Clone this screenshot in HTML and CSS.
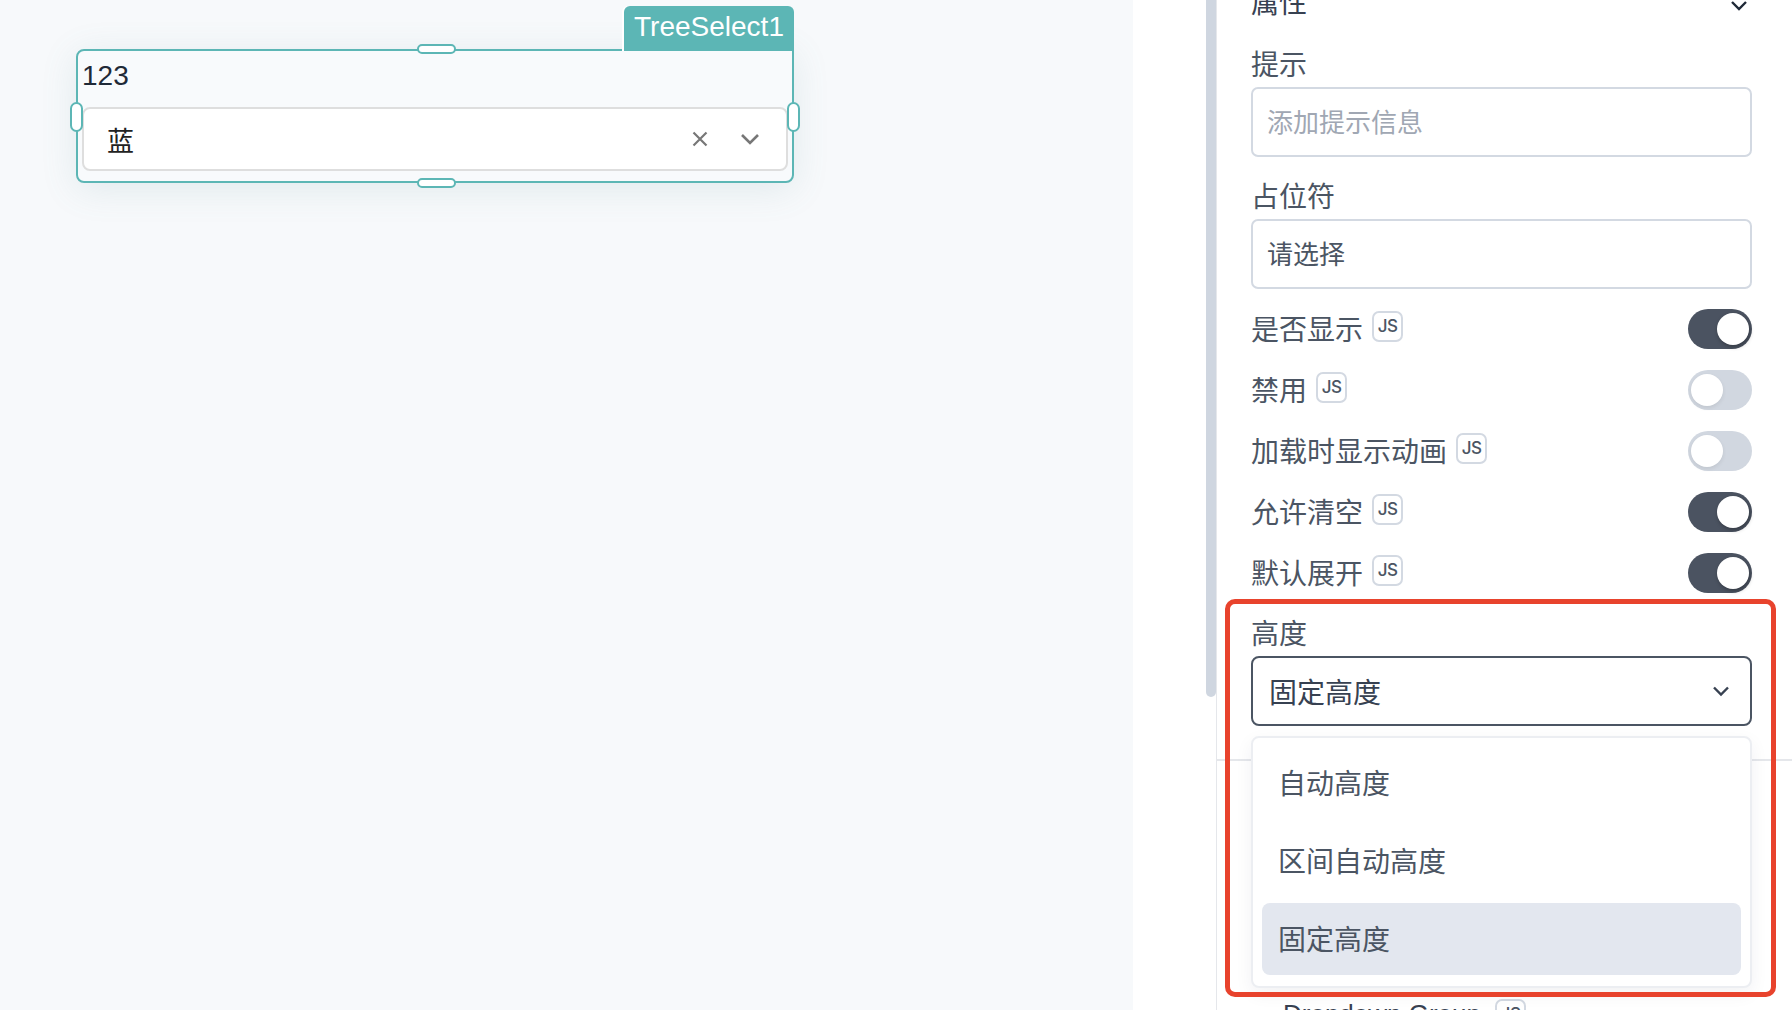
FILE: index.html
```html
<!DOCTYPE html>
<html lang="zh-CN">
<head>
  <meta charset="UTF-8">
  <meta name="viewport" content="width=device-width, initial-scale=1.0">
  <title>TreeSelect 属性</title>
  <link rel="stylesheet" href="styles.css">
</head>
<body>
  <div class="canvas">
    <div class="widget">
      <div class="widget-tag">TreeSelect1</div>
      <div class="widget-label">123</div>
      <div class="tree-select">
        <span class="tree-value">蓝</span>
        <svg class="icon-clear" width="16" height="16" viewBox="0 0 16 16"><path d="M1.5 1.5L14.5 14.5M14.5 1.5L1.5 14.5" stroke="#777" stroke-width="2.2" fill="none"/></svg>
        <svg class="icon-arrow" width="20" height="12" viewBox="0 0 20 12"><path d="M2 2L10 10L18 2" stroke="#777" stroke-width="2.6" fill="none"/></svg>
      </div>
      <span class="handle handle-top"></span>
      <span class="handle handle-bottom"></span>
      <span class="handle handle-left"></span>
      <span class="handle handle-right"></span>
    </div>
  </div>

  <div class="gutter">
    <div class="scroll-thumb"></div>
  </div>

  <div class="panel">
    <div class="section-head">
      <span>属性</span>
      <svg width="18" height="12" viewBox="0 0 18 12"><path d="M2 2L9 9L16 2" stroke="#1f2937" stroke-width="2.4" fill="none"/></svg>
    </div>

    <div class="field">
      <div class="field-label">提示</div>
      <div class="text-input placeholder">添加提示信息</div>
    </div>

    <div class="field">
      <div class="field-label">占位符</div>
      <div class="text-input">请选择</div>
    </div>

    <div class="switch-row">
      <span class="switch-label">是否显示</span><span class="js-badge">JS</span>
      <span class="switch on"><span class="knob"></span></span>
    </div>
    <div class="switch-row">
      <span class="switch-label">禁用</span><span class="js-badge">JS</span>
      <span class="switch"><span class="knob"></span></span>
    </div>
    <div class="switch-row">
      <span class="switch-label">加载时显示动画</span><span class="js-badge">JS</span>
      <span class="switch"><span class="knob"></span></span>
    </div>
    <div class="switch-row">
      <span class="switch-label">允许清空</span><span class="js-badge">JS</span>
      <span class="switch on"><span class="knob"></span></span>
    </div>
    <div class="switch-row">
      <span class="switch-label">默认展开</span><span class="js-badge">JS</span>
      <span class="switch on"><span class="knob"></span></span>
    </div>

    <div class="field field-height">
      <div class="field-label">高度</div>
      <div class="select-box">
        <span>固定高度</span>
        <svg width="18" height="12" viewBox="0 0 18 12"><path d="M2 2.5L9 9.5L16 2.5" stroke="#374151" stroke-width="2.4" fill="none"/></svg>
      </div>
    </div>

    <div class="section-divider"></div>

    <div class="section-next">
      <span class="next-title">Dropdown Group</span><span class="js-badge">JS</span>
      <svg class="next-arrow" width="18" height="12" viewBox="0 0 18 12"><path d="M2 2L9 9L16 2" stroke="#1f2937" stroke-width="2.4" fill="none"/></svg>
    </div>

    <!-- 열린 드롭다운 -->
    <ul class="dropdown">
      <li>自动高度</li>
      <li>区间自动高度</li>
      <li class="selected">固定高度</li>
    </ul>

    <div class="highlight-box"></div>
  </div>
</body>
</html>
```

FILE: styles.css
```css
body {
  margin: 0;
  display: flex;
  height: 1010px;
  overflow: hidden;
  font-family: "Noto Sans CJK SC", "Noto Sans", sans-serif;
  color: #4b5563;
  background: #ffffff;
}

.canvas {
  width: 1133px;
  flex-shrink: 0;
  position: relative;
  background: #f7f9fb;
}

.widget {
  position: absolute;
  left: 76px;
  top: 49px;
  width: 718px;
  height: 134px;
  box-sizing: border-box;
  border: 2px solid #5cb6b5;
  border-radius: 0 0 8px 8px;
  border-top-left-radius: 8px;
  background: #f8fafc;
  box-shadow: 0 6px 36px rgba(90, 140, 150, 0.14);
  padding: 0 4px;
}

.widget-tag {
  position: absolute;
  right: -2px;
  top: -45px;
  width: 170px;
  height: 45px;
  box-sizing: border-box;
  background: #5cb6b5;
  border-radius: 6px 6px 0 0;
  color: #ffffff;
  font-family: "Liberation Sans", Arial, sans-serif;
  font-size: 28px;
  line-height: 42px;
  text-align: center;
  box-shadow: -2px 0 0 #ffffff;
}

.widget-label {
  font-family: "Liberation Sans", Arial, sans-serif;
  font-size: 28px;
  line-height: 40px;
  height: 56px;
  padding-top: 5px;
  box-sizing: border-box;
  color: #1f2937;
}

.tree-select {
  display: flex;
  align-items: center;
  height: 64px;
  box-sizing: border-box;
  border: 2px solid #dedede;
  border-radius: 8px;
  background: #ffffff;
  padding: 0 26px 0 23px;
}

.tree-value {
  flex: 1;
  font-size: 27px;
  color: #222222;
}

.icon-clear {
  margin-right: 32px;
}

.handle {
  position: absolute;
  background: #ffffff;
  border: 2px solid #5cb6b5;
  box-sizing: border-box;
  border-radius: 8px;
}

.handle-top,
.handle-bottom {
  width: 39px;
  height: 10px;
  left: 339px;
}

.handle-top { top: -7px; }
.handle-bottom { bottom: -7px; }

.handle-left,
.handle-right {
  width: 13px;
  height: 30px;
  top: 51px;
}

.handle-left { left: -8px; }
.handle-right { right: -8px; }

.gutter {
  width: 83px;
  flex-shrink: 0;
  position: relative;
  background: #ffffff;
}

.scroll-thumb {
  position: absolute;
  right: 0;
  top: -10px;
  width: 10px;
  height: 707px;
  background: #cfd6e0;
  border-radius: 5px;
}

.panel {
  flex: 1;
  position: relative;
  border-left: 1px solid #e5e7eb;
  padding: 0 40px 0 34px;
  background: #ffffff;
}

.section-head {
  display: flex;
  justify-content: space-between;
  align-items: center;
  height: 36px;
  margin-top: -17px;
  font-size: 28px;
  color: #374151;
}

.section-head svg {
  margin-right: 4px;
  margin-top: 10px;
}

.field {
  margin-top: 26px;
}

.field + .field {
  margin-top: 20px;
}

.field-label {
  font-size: 28px;
  line-height: 36px;
  color: #4b5563;
}

.text-input {
  margin-top: 6px;
  height: 70px;
  box-sizing: border-box;
  border: 2px solid #d3d9e2;
  border-radius: 7px;
  padding: 0 14px;
  font-size: 26px;
  line-height: 64px;
  color: #4b5563;
}

.text-input.placeholder {
  color: #a0a7b3;
}

.switch-row {
  display: flex;
  align-items: center;
  height: 40px;
  margin-top: 21px;
}

.field + .switch-row {
  margin-top: 20px;
}

.switch-label {
  font-size: 28px;
  line-height: 36px;
  margin-top: -3px;
  color: #4b5563;
}

.js-badge {
  width: 31px;
  height: 31px;
  box-sizing: border-box;
  margin-left: 9px;
  border: 2px solid #d3d9e2;
  border-radius: 7px;
  font-family: Inter, "Noto Sans", sans-serif;
  font-size: 17px;
  font-weight: 500;
  line-height: 27px;
  text-align: center;
  letter-spacing: -0.5px;
  color: #4b5563;
  margin-top: -6px;
}

.switch {
  margin-left: auto;
  position: relative;
  width: 64px;
  height: 40px;
  border-radius: 20px;
  background: #d1d7e0;
}

.switch .knob {
  position: absolute;
  top: 4px;
  left: 3px;
  width: 32px;
  height: 32px;
  border-radius: 50%;
  background: #ffffff;
  box-shadow: 0 2px 4px rgba(0, 0, 0, 0.08);
}

.switch.on {
  background: #4b5361;
}

.switch.on .knob {
  left: 29px;
  box-shadow: 1px 2px 4px rgba(0, 0, 0, 0.3);
}

.field-height {
  margin-top: 21px;
}

.select-box {
  margin-top: 6px;
  height: 70px;
  box-sizing: border-box;
  border: 2px solid #4b5563;
  border-radius: 8px;
  padding: 0 20px 0 16px;
  display: flex;
  align-items: center;
  justify-content: space-between;
  font-size: 28px;
  color: #374151;
}

.section-divider {
  height: 2px;
  background: #e5e7eb;
  margin: 33px -40px 0 -34px;
}

.section-next {
  display: flex;
  align-items: center;
  margin-top: 238px;
  padding-left: 32px;
  font-family: "Liberation Sans", Arial, sans-serif;
  font-size: 26px;
  color: #374151;
}

.section-next .js-badge {
  margin-left: 14px;
  margin-top: 0;
}

.next-arrow {
  margin-left: auto;
  margin-right: 6px;
}

.dropdown {
  position: absolute;
  left: 34px;
  top: 736px;
  width: 501px;
  height: 252px;
  box-sizing: border-box;
  margin: 0;
  padding: 9px 9px 0;
  list-style: none;
  background: #ffffff;
  border: 2px solid #eceef2;
  border-radius: 8px;
  box-shadow: 0 6px 18px rgba(30, 40, 60, 0.06);
}

.dropdown li {
  height: 72px;
  margin-bottom: 6px;
  padding-left: 16px;
  border-radius: 8px;
  font-size: 28px;
  line-height: 70px;
  color: #4b5563;
}

.dropdown li.selected {
  background: #e3e7ef;
}

.highlight-box {
  position: absolute;
  left: 8px;
  top: 599px;
  width: 551px;
  height: 398px;
  box-sizing: border-box;
  border: 5px solid #e8432d;
  border-radius: 10px;
  pointer-events: none;
}
```
